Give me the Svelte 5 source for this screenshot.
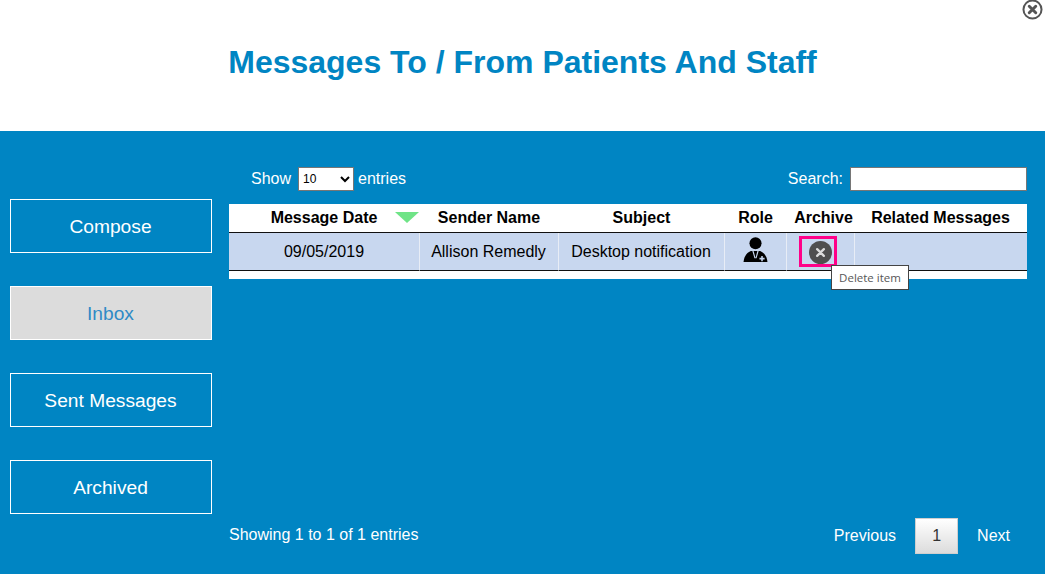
<script>
    const navItems = [
        { label: 'Compose', active: false },
        { label: 'Inbox', active: true },
        { label: 'Sent Messages', active: false },
        { label: 'Archived', active: false }
    ];
    const columns = ['Message Date', 'Sender Name', 'Subject', 'Role', 'Archive', 'Related Messages'];
</script>

<div class="page">
    <header>
        <h1>Messages To / From Patients And Staff</h1>
        <svg class="close" viewBox="0 0 20 20" aria-label="Close">
            <circle cx="10" cy="10" r="8.6" fill="#fff" stroke="#555" stroke-width="1.9" />
            <path d="M6.9 6.9l6.2 6.2M13.1 6.9l-6.2 6.2" stroke="#555" stroke-width="2.8" stroke-linecap="round" />
        </svg>
    </header>

    <div class="body">
        <nav>
            {#each navItems as item}
                <button class:active={item.active}>{item.label}</button>
            {/each}
        </nav>

        <main>
            <div class="controls">
                <label class="length">
                    Show
                    <select>
                        <option>10</option>
                    </select>
                    entries
                </label>
                <label class="search">
                    Search:
                    <input type="text" />
                </label>
            </div>

            <table>
                <colgroup>
                    <col style="width: 191px" />
                    <col style="width: 139px" />
                    <col style="width: 166px" />
                    <col style="width: 62px" />
                    <col style="width: 68px" />
                    <col />
                </colgroup>
                <thead>
                    <tr>
                        {#each columns as column, i}
                            <th class:shifted={i === 4}>
                                {column}
                                {#if i === 0}<span class="arrow"></span>{/if}
                            </th>
                        {/each}
                    </tr>
                </thead>
                <tbody>
                    <tr>
                        <td>09/05/2019</td>
                        <td>Allison Remedly</td>
                        <td>Desktop notification</td>
                        <td>
                            <svg class="role" viewBox="0 0 24 24" aria-label="Doctor">
                                <circle cx="12" cy="6" r="5.8" fill="#000" />
                                <path d="M.5 24C1 19 3 15.500 7.500 13.500h9C21 15.500 23 19 23.500 24z" fill="#000" />
                                <path d="M9.500 13.200l2 7M14.500 13.200l-2 7" stroke="#c8d7ef" stroke-width="1.100" fill="none" />
                                <path d="M15.800 20h1.700v-1.700h1.500V20h1.700v1.500H19v1.700h-1.500v-1.700h-1.700z" fill="#c8d7ef" />
                            </svg>
                        </td>
                        <td class="archive">
                            <span class="delete">
                                <svg viewBox="0 0 22 22" aria-label="Delete">
                                    <circle cx="11" cy="11" r="11" fill="#4f4f4f" />
                                    <path d="M7.800 7.800l6.400 6.400M14.200 7.800l-6.400 6.400" stroke="#dcdcdc" stroke-width="2.200" stroke-linecap="round" />
                                </svg>
                            </span>
                            <span class="tooltip">Delete item</span>
                        </td>
                        <td></td>
                    </tr>
                </tbody>
            </table>

            <div class="footer">
                <span class="info">Showing 1 to 1 of 1 entries</span>
                <div class="pager">
                    <span>Previous</span>
                    <span class="current">1</span>
                    <span>Next</span>
                </div>
            </div>
        </main>
    </div>
</div>

<style>
    :global(body) {
        margin: 0;
        font-family: "Liberation Sans", Arial, sans-serif;
    }

    .page {
        width: 1045px;
        height: 574px;
        display: flex;
        flex-direction: column;
        overflow: hidden;
    }

    header {
        position: relative;
        height: 131px;
        background: #fff;
        display: flex;
        justify-content: center;
        padding-top: 44px;
        box-sizing: border-box;
    }

    h1 {
        margin: 0;
        font-size: 32px;
        line-height: 37px;
        font-weight: 700;
        color: #0085c3;
    }

    .close {
        position: absolute;
        top: -1px;
        right: 2px;
        width: 21px;
        height: 21px;
    }

    .body {
        flex: 1;
        background: #0085c3;
        display: flex;
        color: #fff;
        font-size: 16px;
    }

    nav {
        width: 202px;
        margin: 68px 17px 0 10px;
        display: flex;
        flex-direction: column;
        gap: 33px;
    }

    nav button {
        height: 54px;
        background: #0085c3;
        border: 1px solid #fff;
        color: #fff;
        font-family: inherit;
        font-size: 19.2px;
        padding: 2px 1px 0 0;
    }

    nav button.active {
        background: #dcdcdc;
        color: #2f8ac6;
    }

    main {
        width: 798px;
        display: flex;
        flex-direction: column;
    }

    .controls {
        display: flex;
        justify-content: space-between;
        align-items: center;
        height: 24px;
        margin-top: 36px;
        padding-left: 22px;
    }

    .length, .search {
        display: flex;
        align-items: center;
    }

    select {
        width: 56px;
        height: 24px;
        margin: 0 4px 0 7px;
        font-family: inherit;
        font-size: 12px;
        background: #fff;
        border: 1px solid #767676;
        border-radius: 0;
        padding: 0;
    }

    .search input {
        width: 177px;
        height: 24px;
        box-sizing: border-box;
        margin-left: 7px;
        border: 1px solid #767676;
        padding: 0;
        background: #fff;
    }

    table {
        table-layout: fixed;
        width: 798px;
        margin-top: 13px;
        border-collapse: separate;
        border-spacing: 0;
        background: #fff;
        color: #000;
        padding-bottom: 8px;
    }

    th {
        height: 28px;
        padding: 0 1px 0 0;
        font-size: 16px;
        font-weight: 700;
        text-align: center;
        border-bottom: 1px solid #111;
        position: relative;
    }

    th.shifted {
        padding-left: 6px;
    }

    .arrow {
        position: absolute;
        right: 1px;
        top: 8px;
        width: 0;
        height: 0;
        border-left: 12px solid transparent;
        border-right: 12px solid transparent;
        border-top: 11px solid #6fe487;
    }

    td {
        height: 37px;
        padding: 0 1px 0 0;
        background: #c8d7ef;
        text-align: center;
        font-size: 16px;
        border-bottom: 1px solid #111;
        border-right: 1px solid #e8edf6;
        position: relative;
    }

    td:first-child {
        padding-right: 0;
    }

    td:last-child {
        border-right: 0;
    }

    .role {
        display: block;
        width: 25px;
        height: 25px;
        margin: -4px auto 0;
    }

    .delete {
        position: absolute;
        left: 12px;
        top: 3px;
        width: 32px;
        height: 25px;
        border: 3px solid #ff0088;
        display: flex;
        align-items: center;
        justify-content: center;
    }

    .delete svg {
        width: 23px;
        height: 23px;
        margin: 2px 0 0 4px;
    }

    .tooltip {
        position: absolute;
        left: 44px;
        top: 32px;
        width: 78px;
        height: 25px;
        box-sizing: border-box;
        background: #fff;
        border: 1px solid #444;
        color: #575757;
        font-family: "Open Sans", sans-serif;
        font-size: 11.5px;
        line-height: 23px;
        white-space: nowrap;
        z-index: 2;
    }

    .footer {
        margin-top: auto;
        margin-bottom: 20px;
        display: flex;
        justify-content: space-between;
        align-items: center;
    }

    .info {
        margin-top: -2px;
    }

    .pager {
        display: flex;
        align-items: center;
        gap: 19px;
        padding-right: 17px;
    }

    .current {
        width: 43px;
        height: 36px;
        box-sizing: border-box;
        border: 1px solid #cfcfcf;
        background: linear-gradient(#fff, #dcdcdc);
        color: #333;
        display: flex;
        align-items: center;
        justify-content: center;
    }
</style>
